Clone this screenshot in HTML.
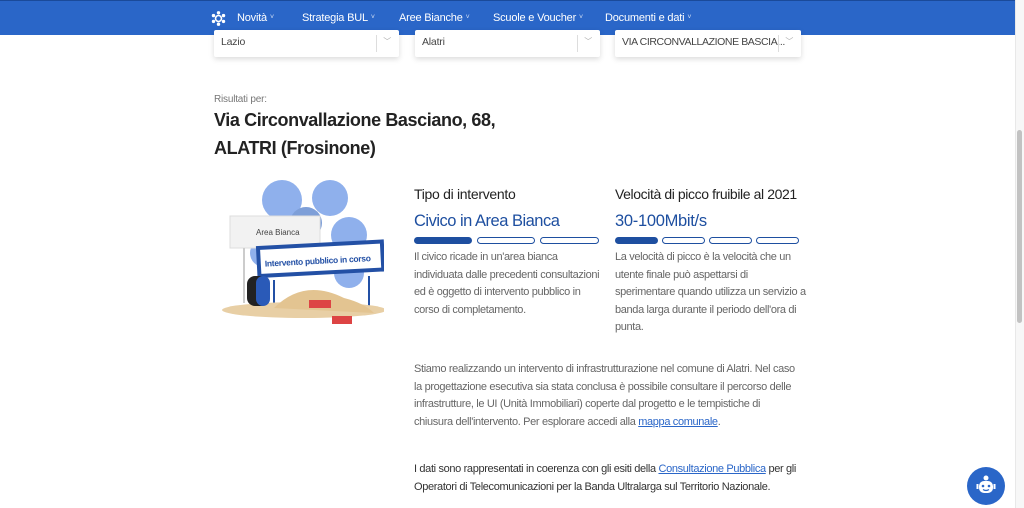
<!DOCTYPE html>
<html><head><meta charset="utf-8"><style>
*{margin:0;padding:0;box-sizing:border-box}
body{width:1024px;height:508px;overflow:hidden;background:#fff;font-family:"Liberation Sans",sans-serif;color:#333;position:relative}
.hdr{position:absolute;left:0;top:0;width:1015px;height:35px;background:#2a66c8;border-top:1px solid #1a4a9a}
.hdr span{position:absolute;top:11px;color:#fff;font-size:11px;letter-spacing:-0.2px}
.hdr span i{font-style:normal;font-size:7px;margin-left:3px;opacity:.8;position:relative;top:-2px}
.sb{position:absolute;left:1015px;top:0;width:9px;height:508px;background:#f7f7f7;border-left:1px solid #e8e8e8}
.thumb{position:absolute;left:1017px;top:130px;width:5px;height:193px;background:#c2c2c2;border-radius:3px}
.sel{position:absolute;top:30px;height:27px;background:#fff;box-shadow:0 2px 6px rgba(0,0,0,.15);border-radius:2px;font-size:10.5px;letter-spacing:-0.2px;color:#444;padding:6px 7px;white-space:nowrap;overflow:hidden}
.sel b{position:absolute;right:22px;top:5px;width:1px;height:17px;background:#ddd}
.sel em{position:absolute;right:8px;top:6px;font-style:normal;color:#aaa;font-size:8px;background:#fff}
.t{position:absolute;white-space:nowrap}
.bar{position:absolute;top:237px;height:7px;border:1px solid #1e4fa0;border-radius:4px}
.bar.f{background:#1e4fa0}
p.t{font-size:11px;letter-spacing:-0.35px;line-height:17.5px;color:#666}
a{color:#2a66c8}
</style></head><body>
<div class="hdr">
<svg style="position:absolute;left:211px;top:10px" width="15" height="15" viewBox="0 0 15 15"><circle cx="7.5" cy="7.5" r="3" fill="none" stroke="#fff" stroke-width="1.6"/><g fill="#fff"><circle cx="7.5" cy="1.8" r="1.7"/><circle cx="7.5" cy="13.2" r="1.7"/><circle cx="2.5" cy="4.6" r="1.7"/><circle cx="12.5" cy="4.6" r="1.7"/><circle cx="2.5" cy="10.4" r="1.7"/><circle cx="12.5" cy="10.4" r="1.7"/></g></svg>
<span style="left:237px">Novità<i>˅</i></span>
<span style="left:302px">Strategia BUL<i>˅</i></span>
<span style="left:399px">Aree Bianche<i>˅</i></span>
<span style="left:493px">Scuole e Voucher<i>˅</i></span>
<span style="left:605px">Documenti e dati<i>˅</i></span>
</div>
<div class="sel" style="left:214px;width:185px">Lazio<b></b><em>﹀</em></div>
<div class="sel" style="left:415px;width:185px">Alatri<b></b><em>﹀</em></div>
<div class="sel" style="left:615px;width:186px;letter-spacing:-0.4px">VIA CIRCONVALLAZIONE BASCIA...<b></b><em>﹀</em></div>
<div class="t" style="left:214px;top:94px;font-size:10px;color:#777;letter-spacing:-0.2px">Risultati per:</div>
<div class="t" style="left:214px;top:106px;font-size:18px;letter-spacing:-0.4px;font-weight:bold;color:#222;line-height:28px">Via Circonvallazione Basciano, 68,<br>ALATRI (Frosinone)</div>
<svg style="position:absolute;left:214px;top:178px" width="170" height="160" viewBox="0 0 170 160">
<g fill="#8fb0ec"><circle cx="68" cy="22" r="20"/><circle cx="116" cy="20" r="18"/><circle cx="135" cy="57" r="18"/><circle cx="92" cy="45" r="16" fill="#7e9fd8"/><circle cx="135" cy="95" r="15"/><circle cx="50" cy="75" r="14"/></g>
<rect x="16" y="38" width="90" height="32" fill="#f2f2f2" stroke="#ddd"/>
<text x="42" y="57" font-size="8" fill="#444" font-family="Liberation Sans">Area Bianca</text>
<line x1="30" y1="70" x2="30" y2="125" stroke="#ccc" stroke-width="2"/>
<rect x="44" y="70" width="124" height="28" fill="#fff" stroke="#2350a5" stroke-width="4" transform="rotate(-3 44 70)"/>
<text x="50" y="89" font-size="8.5" font-weight="bold" fill="#2350a5" font-family="Liberation Sans" letter-spacing="-0.3" transform="rotate(-3 44 70)">Intervento pubblico in corso</text>
<line x1="60" y1="102" x2="60" y2="130" stroke="#2350a5" stroke-width="2"/><line x1="155" y1="98" x2="155" y2="135" stroke="#2350a5" stroke-width="2"/>
<ellipse cx="90" cy="132" rx="82" ry="8" fill="#e8cfa5"/>
<path d="M60 130 Q90 100 130 120 Q150 125 160 135 Z" fill="#e3c491"/>
<rect x="33" y="98" width="22" height="30" rx="8" fill="#222"/><rect x="42" y="98" width="14" height="30" rx="7" fill="#2a5ab8"/>
<rect x="95" y="122" width="22" height="8" fill="#d44"/><rect x="118" y="138" width="20" height="8" fill="#d44"/>
</svg>
<div class="t" style="left:414px;top:186px;font-size:14px;letter-spacing:-0.3px;color:#222">Tipo di intervento</div>
<div class="t" style="left:414px;top:212px;font-size:16.5px;letter-spacing:-0.5px;color:#1e4fa0">Civico in Area Bianca</div>
<div class="bar f" style="left:414px;width:58px"></div><div class="bar" style="left:477px;width:58px"></div><div class="bar" style="left:540px;width:59px"></div>
<p class="t" style="left:414px;top:249px">Il civico ricade in un'area bianca<br>individuata dalle precedenti consultazioni<br>ed è oggetto di intervento pubblico in<br>corso di completamento.</p>
<div class="t" style="left:615px;top:186px;font-size:14px;letter-spacing:-0.4px;color:#222">Velocità di picco fruibile al 2021</div>
<div class="t" style="left:615px;top:212px;font-size:16.5px;letter-spacing:-0.3px;color:#1e4fa0">30-100Mbit/s</div>
<div class="bar f" style="left:615px;width:43px"></div><div class="bar" style="left:662px;width:43px"></div><div class="bar" style="left:709px;width:43px"></div><div class="bar" style="left:756px;width:43px"></div>
<p class="t" style="left:615px;top:249px">La velocità di picco è la velocità che un<br>utente finale può aspettarsi di<br>sperimentare quando utilizza un servizio a<br>banda larga durante il periodo dell'ora di<br>punta.</p>
<p class="t" style="left:414px;top:361px">Stiamo realizzando un intervento di infrastrutturazione nel comune di Alatri. Nel caso<br>la progettazione esecutiva sia stata conclusa è possibile consultare il percorso delle<br>infrastrutture, le UI (Unità Immobiliari) coperte dal progetto e le tempistiche di<br>chiusura dell'intervento. Per esplorare accedi alla <a style="text-decoration:underline">mappa comunale</a>.</p>
<p class="t" style="left:414px;top:461px;color:#333">I dati sono rappresentati in coerenza con gli esiti della <a style="text-decoration:underline">Consultazione Pubblica</a> per gli<br>Operatori di Telecomunicazioni per la Banda Ultralarga sul Territorio Nazionale.</p>
<div style="position:absolute;left:967px;top:467px;width:38px;height:38px;border-radius:50%;background:#2a66c8"></div>
<svg style="position:absolute;left:976px;top:474px" width="20" height="24" viewBox="0 0 20 24"><circle cx="10" cy="4" r="2.5" fill="#fff"/><rect x="3" y="7" width="14" height="12" rx="5" fill="#fff"/><rect x="0.5" y="10" width="2" height="5" fill="#fff"/><rect x="17.5" y="10" width="2" height="5" fill="#fff"/><circle cx="7" cy="12" r="1.3" fill="#2a66c8"/><circle cx="13" cy="12" r="1.3" fill="#2a66c8"/><path d="M7 15.5 Q10 17.5 13 15.5" stroke="#2a66c8" stroke-width="1.2" fill="none"/></svg>
<div class="sb"></div><div class="thumb"></div>
</body></html>
